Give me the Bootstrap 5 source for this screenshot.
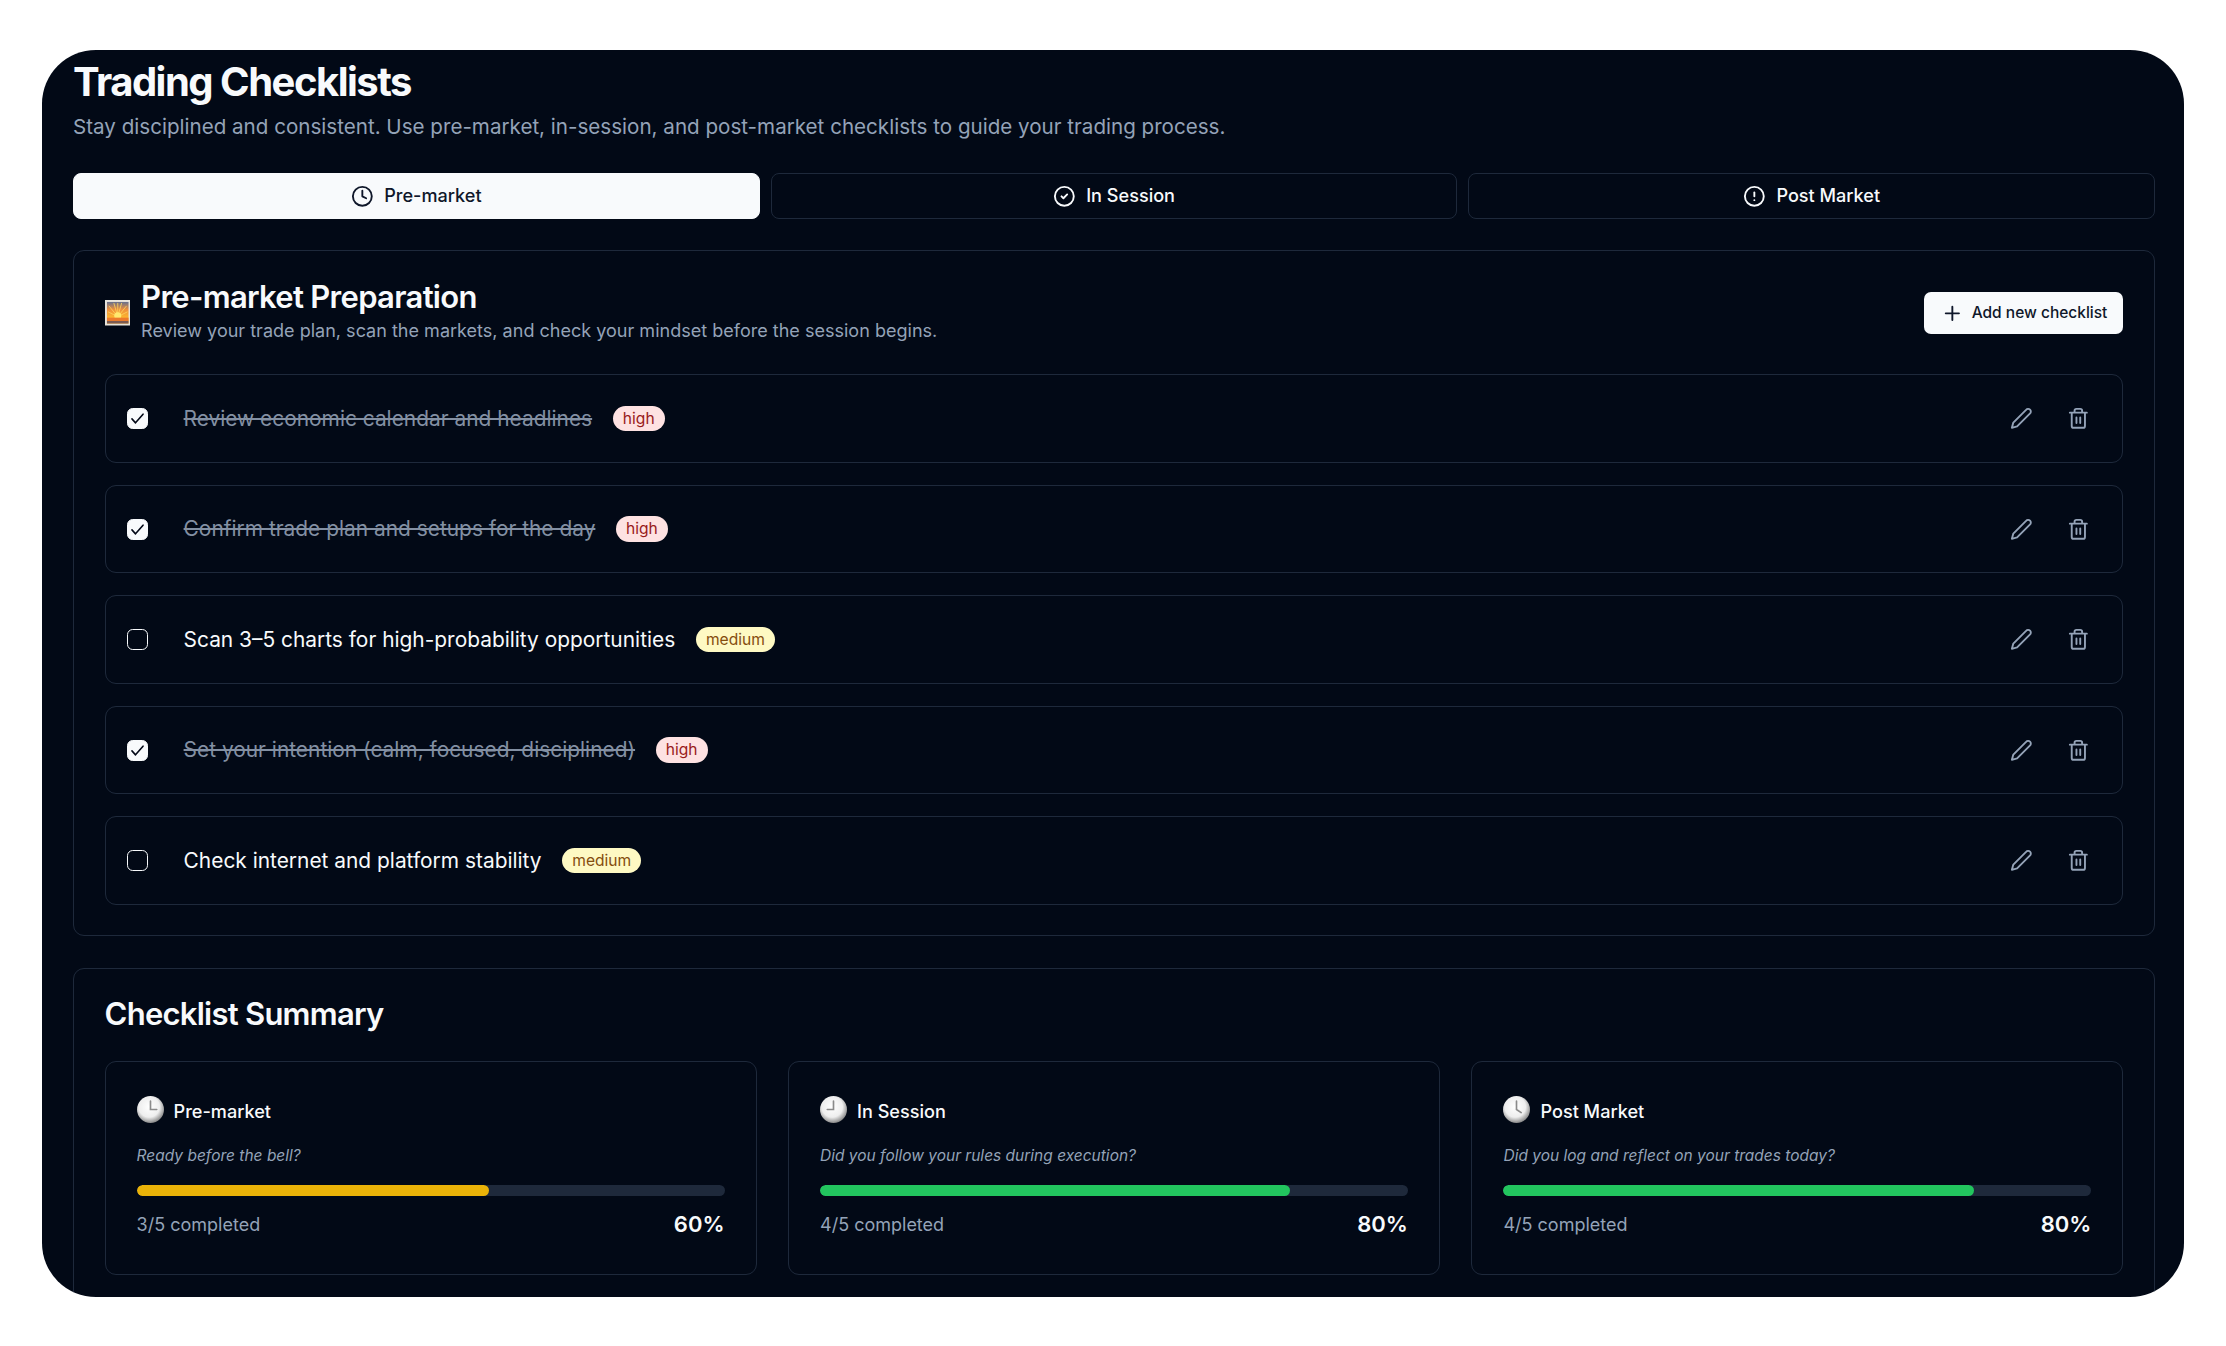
<!DOCTYPE html>
<html lang="en"><head><meta charset="utf-8"><title>Trading Checklists</title>
<link href="https://cdn.jsdelivr.net/npm/bootstrap@5.3.0/dist/css/bootstrap.min.css" rel="stylesheet">
<style>
body{background:#fff;font-family:Inter,"Liberation Sans",sans-serif;color:#f8fafc;margin:0}
.frame{margin:50px 42px 0;height:1247px;overflow:hidden;border-radius:54px;background:#020916;padding:7px 29px 0 31px}
.ttl{font-size:40px;line-height:50px;font-weight:700;letter-spacing:-1.5px;margin:0;color:#f8fafc}
.subttl{font-size:20.6px;line-height:28px;color:#94a3b8;margin:6px 0 0 0}
.tabs{margin-top:32px;gap:11px}
.tabbtn{flex:1 1 0;height:46px;display:flex;align-items:center;justify-content:center;gap:10.5px;font-size:18.1px;font-weight:500;color:#f8fafc;background:transparent;border:1.4px solid #1e293b;border-radius:8px;padding:0}
.tabbtn.on,.tabbtn.on:hover{background:#f8fafc;color:#0f172a;border-color:#f8fafc}
.tabbtn svg{width:22.7px;height:22.7px}
.panel{background:transparent;border:1.4px solid #1e293b;border-radius:11px;color:#f8fafc}
.panel-a{margin-top:31px;padding:30.6px 30.6px 29.8px}
.panel-b{margin-top:32.6px;padding:30.6px}
.sec-title{font-size:31px;line-height:30px;font-weight:600;letter-spacing:-.7px;margin:0}
.sec-sub{font-size:18.05px;line-height:28px;color:#94a3b8;margin:5px 0 0}
.sun{width:25.5px;height:25.5px;margin-right:11px;flex:none}
.addbtn{height:42px;padding:0 16px 0 16.5px;display:flex;align-items:center;gap:8px;background:#f8fafc;color:#0f172a;border:0;border-radius:7px;font-size:15.5px;font-weight:500}
.addbtn:hover{background:#f8fafc;color:#0f172a}
.addbtn svg{width:22.7px;height:22.7px}
.rows{margin-top:29.7px;display:flex;flex-direction:column;gap:22px}
.rowitem{height:88.5px;border:1.4px solid #1e293b;border-radius:11px;padding:0 32.7px 0 21px;display:flex;align-items:center}
.rowitem .form-check-input{width:21px;height:21px;margin:0 36px 0 0;background-color:transparent;border:1.4px solid #f8fafc;border-radius:5.7px;flex:none}
.rowitem .form-check-input:checked{background-color:#f8fafc;border-color:#f8fafc;background-size:100%;background-image:url("data:image/svg+xml,%3csvg xmlns='http://www.w3.org/2000/svg' viewBox='0 0 24 24'%3e%3cpath fill='none' stroke='%23020817' stroke-width='2' stroke-linecap='round' stroke-linejoin='round' d='M5 12.5l4.5 5 9.5-11'/%3e%3c/svg%3e")}
.itemtxt{font-size:20.9px;font-weight:400;color:#f8fafc}
.itemtxt.done{color:#8390a3;text-decoration:line-through}
.pri{margin-left:20.5px;font-size:15.6px;line-height:21.5px;font-weight:400;padding:2px 10.2px;border-radius:14px}
.pri-h{background:#fee2e2;color:#991b1b}
.pri-m{background:#fef9c3;color:#854d0e}
.acts{margin-left:auto;display:flex;align-items:center;gap:34px;color:#94a3b8}
.acts svg{width:22.7px;height:22.7px;display:block}
.sum-title{font-size:31px;line-height:28px;font-weight:600;letter-spacing:-.75px;margin:0}
.sumgrid{margin-top:33px;display:grid;grid-template-columns:repeat(3,1fr);gap:31.5px}
.sumcard{border:1.4px solid #1e293b;border-radius:11px;padding:30.6px 31px 35.1px}
.sumhead{display:flex;align-items:center;height:34px;gap:10px;font-size:18.1px;font-weight:500}
.sumhead svg{width:27px;height:27px;flex:none}
.sumhead span{padding-top:5px}
.q{margin:17.4px 0 0;font-size:15.5px;line-height:24px;font-style:italic;color:#94a3b8}
.bar{margin-top:17.6px;height:11px;background:#1e293b;border-radius:6px}
.bar-y{background:#eab308}.bar-g{background:#22c55e}
.bar .progress-bar{border-radius:6px}
.meta{margin-top:14.9px;display:flex;justify-content:space-between;align-items:center;line-height:28px;font-size:18px;color:#94a3b8}
.pct{font-size:22px;font-weight:600;color:#f8fafc;position:relative;top:-1px}
</style></head><body>
<svg width="0" height="0" class="position-absolute"><defs>
<radialGradient id="cg" cx=".45" cy=".4" r=".62"><stop offset="0" stop-color="#fff"/><stop offset=".62" stop-color="#eeeeee"/><stop offset="1" stop-color="#808080"/></radialGradient>
<linearGradient id="sk" x1="0" y1="0" x2="0" y2="1"><stop offset="0" stop-color="#66708e"/><stop offset=".35" stop-color="#ee8f3c"/><stop offset=".72" stop-color="#fdb52e"/></linearGradient>
</defs></svg>
<main class="frame">
<h1 class="ttl">Trading Checklists</h1>
<p class="subttl">Stay disciplined and consistent. Use pre-market, in-session, and post-market checklists to guide your trading process.</p>
<div class="d-flex tabs">
<button class="btn tabbtn on"><svg viewBox="0 0 24 24" fill="none" stroke="currentColor" stroke-width="2" stroke-linecap="round" stroke-linejoin="round"><circle cx="12" cy="12" r="10"/><polyline points="12 6 12 12 16 14"/></svg>Pre-market</button>
<button class="btn tabbtn"><svg viewBox="0 0 24 24" fill="none" stroke="currentColor" stroke-width="2" stroke-linecap="round" stroke-linejoin="round"><circle cx="12" cy="12" r="10"/><path d="m9 12 2 2 4-4"/></svg>In Session</button>
<button class="btn tabbtn"><svg viewBox="0 0 24 24" fill="none" stroke="currentColor" stroke-width="2" stroke-linecap="round" stroke-linejoin="round"><circle cx="12" cy="12" r="10"/><line x1="12" y1="8" x2="12" y2="12"/><line x1="12" y1="16" x2="12.01" y2="16"/></svg>Post Market</button>
</div>
<section class="card panel panel-a">
<div class="d-flex align-items-center justify-content-between">
<div class="d-flex align-items-center">
<svg class="sun" viewBox="0 0 26 26"><rect width="26" height="26" fill="#e8e4dc"/><rect x="2" y="2" width="22" height="22" fill="url(#sk)"/><g stroke="#fdd35c" stroke-width="1" opacity=".85"><path d="M13 17 4 6M13 17 9 3M13 17V3M13 17l4-14M13 17 22 6M13 17 3 12M13 17l10-5"/></g><circle cx="13" cy="16" r="3.6" fill="#ffe96e"/><rect x="2" y="18" width="22" height="3.4" fill="#ec7a2c"/><rect x="2" y="21.4" width="22" height="2.6" fill="#7a5a52"/></svg>
<div><h2 class="sec-title">Pre-market Preparation</h2><p class="sec-sub">Review your trade plan, scan the markets, and check your mindset before the session begins.</p></div>
</div>
<button class="btn addbtn"><svg viewBox="0 0 24 24" fill="none" stroke="currentColor" stroke-width="2" stroke-linecap="round" stroke-linejoin="round"><path d="M5 12h14M12 5v14"/></svg>Add new checklist</button>
</div>
<div class="rows">
<div class="rowitem"><input class="form-check-input" type="checkbox" checked aria-label="done"><span class="itemtxt done">Review economic calendar and headlines</span><span class="badge pri pri-h">high</span><div class="acts"><svg viewBox="0 0 24 24" fill="none" stroke="currentColor" stroke-width="2" stroke-linecap="round" stroke-linejoin="round"><path d="M17 3a2.85 2.83 0 1 1 4 4L7.5 20.5 2 22l1.5-5.5Z"/></svg><svg viewBox="0 0 24 24" fill="none" stroke="currentColor" stroke-width="2" stroke-linecap="round" stroke-linejoin="round"><path d="M3 6h18M19 6v14c0 1-1 2-2 2H7c-1 0-2-1-2-2V6M8 6V4c0-1 1-2 2-2h4c1 0 2 1 2 2v2M10 11v6M14 11v6"/></svg></div></div>
<div class="rowitem"><input class="form-check-input" type="checkbox" checked aria-label="done"><span class="itemtxt done">Confirm trade plan and setups for the day</span><span class="badge pri pri-h">high</span><div class="acts"><svg viewBox="0 0 24 24" fill="none" stroke="currentColor" stroke-width="2" stroke-linecap="round" stroke-linejoin="round"><path d="M17 3a2.85 2.83 0 1 1 4 4L7.5 20.5 2 22l1.5-5.5Z"/></svg><svg viewBox="0 0 24 24" fill="none" stroke="currentColor" stroke-width="2" stroke-linecap="round" stroke-linejoin="round"><path d="M3 6h18M19 6v14c0 1-1 2-2 2H7c-1 0-2-1-2-2V6M8 6V4c0-1 1-2 2-2h4c1 0 2 1 2 2v2M10 11v6M14 11v6"/></svg></div></div>
<div class="rowitem"><input class="form-check-input" type="checkbox" aria-label="todo"><span class="itemtxt">Scan 3–5 charts for high-probability opportunities</span><span class="badge pri pri-m">medium</span><div class="acts"><svg viewBox="0 0 24 24" fill="none" stroke="currentColor" stroke-width="2" stroke-linecap="round" stroke-linejoin="round"><path d="M17 3a2.85 2.83 0 1 1 4 4L7.5 20.5 2 22l1.5-5.5Z"/></svg><svg viewBox="0 0 24 24" fill="none" stroke="currentColor" stroke-width="2" stroke-linecap="round" stroke-linejoin="round"><path d="M3 6h18M19 6v14c0 1-1 2-2 2H7c-1 0-2-1-2-2V6M8 6V4c0-1 1-2 2-2h4c1 0 2 1 2 2v2M10 11v6M14 11v6"/></svg></div></div>
<div class="rowitem"><input class="form-check-input" type="checkbox" checked aria-label="done"><span class="itemtxt done">Set your intention (calm, focused, disciplined)</span><span class="badge pri pri-h">high</span><div class="acts"><svg viewBox="0 0 24 24" fill="none" stroke="currentColor" stroke-width="2" stroke-linecap="round" stroke-linejoin="round"><path d="M17 3a2.85 2.83 0 1 1 4 4L7.5 20.5 2 22l1.5-5.5Z"/></svg><svg viewBox="0 0 24 24" fill="none" stroke="currentColor" stroke-width="2" stroke-linecap="round" stroke-linejoin="round"><path d="M3 6h18M19 6v14c0 1-1 2-2 2H7c-1 0-2-1-2-2V6M8 6V4c0-1 1-2 2-2h4c1 0 2 1 2 2v2M10 11v6M14 11v6"/></svg></div></div>
<div class="rowitem"><input class="form-check-input" type="checkbox" aria-label="todo"><span class="itemtxt">Check internet and platform stability</span><span class="badge pri pri-m">medium</span><div class="acts"><svg viewBox="0 0 24 24" fill="none" stroke="currentColor" stroke-width="2" stroke-linecap="round" stroke-linejoin="round"><path d="M17 3a2.85 2.83 0 1 1 4 4L7.5 20.5 2 22l1.5-5.5Z"/></svg><svg viewBox="0 0 24 24" fill="none" stroke="currentColor" stroke-width="2" stroke-linecap="round" stroke-linejoin="round"><path d="M3 6h18M19 6v14c0 1-1 2-2 2H7c-1 0-2-1-2-2V6M8 6V4c0-1 1-2 2-2h4c1 0 2 1 2 2v2M10 11v6M14 11v6"/></svg></div></div>
</div>
</section>
<section class="card panel panel-b">
<h2 class="sum-title">Checklist Summary</h2>
<div class="sumgrid">
<div class="sumcard"><div class="sumhead"><svg viewBox="0 0 26 26"><circle cx="13" cy="13" r="13" fill="url(#cg)"/><path d="M13 5v8h6" fill="none" stroke="#8a8a8a" stroke-width="1.6" stroke-linecap="round"/></svg><span>Pre-market</span></div><p class="q">Ready before the bell?</p><div class="progress bar"><div class="progress-bar bar-y" role="progressbar" style="width:60%"></div></div><div class="meta"><span>3/5 completed</span><span class="pct">60%</span></div></div>
<div class="sumcard"><div class="sumhead"><svg viewBox="0 0 26 26"><circle cx="13" cy="13" r="13" fill="url(#cg)"/><path d="M13 5v8l-6 0" fill="none" stroke="#8a8a8a" stroke-width="1.6" stroke-linecap="round"/></svg><span>In Session</span></div><p class="q">Did you follow your rules during execution?</p><div class="progress bar"><div class="progress-bar bar-g" role="progressbar" style="width:80%"></div></div><div class="meta"><span>4/5 completed</span><span class="pct">80%</span></div></div>
<div class="sumcard"><div class="sumhead"><svg viewBox="0 0 26 26"><circle cx="13" cy="13" r="13" fill="url(#cg)"/><path d="M13 5v8l4.5 3" fill="none" stroke="#8a8a8a" stroke-width="1.6" stroke-linecap="round"/></svg><span>Post Market</span></div><p class="q">Did you log and reflect on your trades today?</p><div class="progress bar"><div class="progress-bar bar-g" role="progressbar" style="width:80%"></div></div><div class="meta"><span>4/5 completed</span><span class="pct">80%</span></div></div>
</div>
</section>
</main>
<script src="https://cdn.jsdelivr.net/npm/bootstrap@5.3.0/dist/js/bootstrap.bundle.min.js"></script>
</body></html>
